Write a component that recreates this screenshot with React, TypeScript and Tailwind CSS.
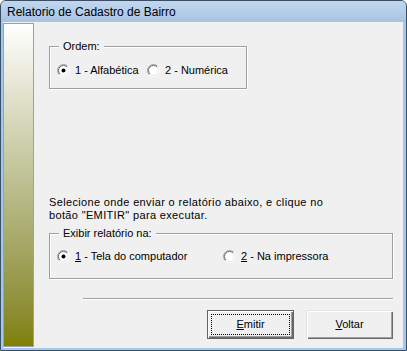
import React from 'react';

const font = { fontFamily: '"Liberation Sans", Arial, sans-serif' };

const Radio: React.FC<{ checked?: boolean }> = ({ checked }) => (
  <svg width="13" height="13" viewBox="0 0 13 13" className="shrink-0">
    <circle cx="6.5" cy="6.5" r="5.5" fill="#ffffff" />
    <path d="M2.25 10.75 A6 6 0 0 1 10.75 2.25" fill="none" stroke="#a0a0a0" strokeWidth="1" />
    <path d="M2.95 10.05 A5 5 0 0 1 10.05 2.95" fill="none" stroke="#696969" strokeWidth="1" />
    <path d="M10.75 2.25 A6 6 0 0 1 2.25 10.75" fill="none" stroke="#ffffff" strokeWidth="1" />
    <path d="M10.05 2.95 A5 5 0 0 1 2.95 10.05" fill="none" stroke="#e3e3e3" strokeWidth="1" />
    {checked && <circle cx="6.5" cy="6.5" r="2" fill="#000000" />}
  </svg>
);

const GroupBox: React.FC<{ label: string; className: string; children: React.ReactNode }> = ({
  label,
  className,
  children,
}) => (
  <div
    className={`relative border border-[#a0a0a0] shadow-[1px_1px_0_#ffffff,inset_1px_1px_0_#ffffff] ${className}`}
  >
    <span className="absolute left-[9px] -top-[7px] px-[4px] bg-[#f0f0f0] leading-[13px]">{label}</span>
    {children}
  </div>
);

export default function App() {
  return (
    <div
      className="w-[407px] h-[351px] flex flex-col border border-[#3b4e63] rounded-t-[6px] bg-[#9fc9ee] overflow-hidden text-[11px] text-black"
      style={font}
    >
      {/* title bar */}
      <div className="h-[21px] shrink-0 flex items-center pl-[6px] bg-gradient-to-b from-[#c1d7ee] to-[#a7c3e3]">
        <span className="text-[12px] leading-none text-black">Relatorio de Cadastro de Bairro</span>
      </div>

      <div className="flex-1 flex ml-[2px] mr-[3px] mb-[2px] bg-[#f0f0f0]">
        <div className="w-[31px] h-[324px] mt-[1px] shrink-0 border border-[#a0a0a0] bg-gradient-to-b from-[#ffffff] to-[#808000]" />

        <div className="flex-1 flex flex-col pl-[15px] pr-[10px]">
          <GroupBox label="Ordem:" className="mt-[24px] w-[198px] h-[43px]">
            <div className="flex items-center pt-[17px] pl-[7px]">
              <div className="flex items-center gap-[5px] w-[90px]">
                <Radio checked />
                <span className="leading-[13px]">1 - Alfabética</span>
              </div>
              <div className="flex items-center gap-[5px]">
                <Radio />
                <span className="leading-[13px]">2 - Numérica</span>
              </div>
            </div>
          </GroupBox>

          <p className="mt-[107px] leading-[13px] tracking-[0.35px]">
            Selecione onde enviar o relatório abaixo, e clique no
            <br />
            botão "EMITIR" para executar.
          </p>

          <GroupBox label="Exibir relatório na:" className="mt-[11px] h-[46px]">
            <div className="flex items-center pt-[16px] pl-[7px]">
              <div className="flex items-center gap-[5px] w-[166px]">
                <Radio checked />
                <span className="leading-[13px]">
                  <span className="underline">1</span> - Tela do computador
                </span>
              </div>
              <div className="flex items-center gap-[5px]">
                <Radio />
                <span className="leading-[13px]">
                  <span className="underline">2</span> - Na impressora
                </span>
              </div>
            </div>
          </GroupBox>

          <div className="mt-[19px] ml-[34px] h-[2px] border-t border-[#a0a0a0] border-b border-b-white" />

          <div className="mt-[10px] flex justify-end gap-[12px]">
            <button className="w-[87px] h-[29px] flex border border-[#646464] bg-[#f0f0f0] shadow-[inset_1px_1px_0_#ffffff,inset_-1px_-1px_0_#696969,inset_-2px_-2px_0_#a0a0a0]">
              <div className="flex-1 m-[3px] flex items-center justify-center border border-dotted border-black">
                <span className="leading-[13px]">
                  <span className="underline">E</span>mitir
                </span>
              </div>
            </button>
            <button className="w-[87px] h-[29px] flex items-center justify-center bg-[#f0f0f0] shadow-[inset_1px_1px_0_#e3e3e3,inset_2px_2px_0_#ffffff,inset_-1px_-1px_0_#696969,inset_-2px_-2px_0_#a0a0a0]">
              <span className="leading-[13px]">
                <span className="underline">V</span>oltar
              </span>
            </button>
          </div>
        </div>
      </div>
    </div>
  );
}
